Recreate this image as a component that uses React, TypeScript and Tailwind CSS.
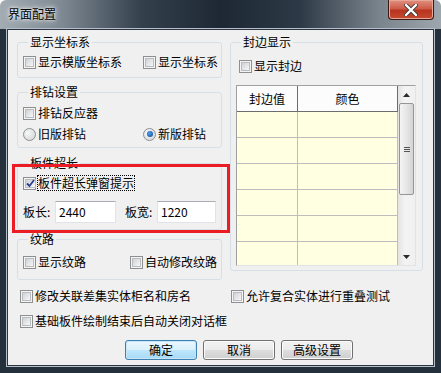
import React from "react";

const font = "font-['SimSun','Noto_Sans_CJK_SC',sans-serif]";

const Box = ({ checked }: { checked?: boolean }) => (
  <span className="w-[13px] h-[13px] shrink-0 border border-[#8e8f8f] bg-[#f4f4f4] p-[1px] flex">
    <span className="flex-1 border border-[#b9bcc0] bg-[linear-gradient(135deg,#cfd2d6,#f7f7f7)] flex items-center justify-center">
      {checked && (
        <svg width="9" height="9" viewBox="0 0 9 9">
          <path d="M1 4.5 L3.5 7 L8 1" fill="none" stroke="#2a3f8f" strokeWidth="1.8" />
        </svg>
      )}
    </span>
  </span>
);

const Radio = ({ checked }: { checked?: boolean }) => (
  <span className="w-[13px] h-[13px] shrink-0 rounded-full border border-[#8e8f8f] bg-[radial-gradient(circle_at_35%_35%,#f7f7f7,#cfd2d6)] flex items-center justify-center">
    {checked && (
      <span className="w-[6px] h-[6px] rounded-full bg-[radial-gradient(circle_at_40%_40%,#4fa2f0,#0b3f8e)]" />
    )}
  </span>
);

const CheckRow = ({ label, checked, focus }: { label: string; checked?: boolean; focus?: boolean }) => (
  <div className="flex items-center gap-[2px] h-[14px] whitespace-nowrap shrink-0">
    <Box checked={checked} />
    <span className={focus ? "outline outline-1 outline-dotted outline-black leading-[14px]" : "leading-[14px]"}>{label}</span>
  </div>
);

const RadioRow = ({ label, checked }: { label: string; checked?: boolean }) => (
  <div className="flex items-center gap-[2px] h-[14px] whitespace-nowrap shrink-0">
    <Radio checked={checked} />
    <span className="leading-[14px]">{label}</span>
  </div>
);

const Group = ({ title, className, children }: { title: string; className: string; children?: React.ReactNode }) => (
  <fieldset className={`border border-[#d5dfe5] rounded-[3px] px-[5px] min-w-0 ${className}`}>
    <legend className="ml-[5px] px-[2px] leading-[14px]">{title}</legend>
    {children}
  </fieldset>
);

const Btn = ({ label, def }: { label: string; def?: boolean }) => (
  <button
    className={`w-[72px] h-[20px] rounded-[3px] border leading-[16px] ${
      def
        ? "border-[#3c7fb1] bg-[linear-gradient(#eaf6fd_0%,#d9f0fc_50%,#bee6fd_51%,#a7d9f5_100%)] shadow-[inset_0_0_0_1px_#c6e6f8]"
        : "border-[#707070] bg-[linear-gradient(#f2f2f2_0%,#ebebeb_50%,#dddddd_51%,#cfcfcf_100%)] shadow-[inset_0_0_0_1px_#fcfcfc]"
    }`}
  >
    {label}
  </button>
);

export default function App() {
  const rows = [0, 1, 2, 3, 4, 5];
  return (
    <div className={`${font} text-[12px] text-black w-[441px] h-[373px] flex flex-col bg-[#24303c] bg-[linear-gradient(90deg,#a3acb3_0%,#7e8993_14%,#34404c_32%,#1d2834_50%,#2d3946_68%,#7a848d_86%,#9ea6ad_100%)] bg-no-repeat bg-[length:100%_29px] rounded-t-[6px] overflow-hidden`}>
      {/* title bar */}
      <div className="h-[29px] flex items-start justify-between shrink-0">
        <span className="ml-[8px] mt-[7px] leading-[14px] text-[12px] text-black [text-shadow:0_0_6px_#ffffff,0_0_3px_#ffffff]">界面配置</span>
        <div className="mr-[7px] w-[46px] h-[20px] rounded-b-[4px] border border-t-0 border-[#3b1a16] bg-[linear-gradient(#e0917f_0%,#cd5d48_45%,#b9341f_55%,#c44a2f_100%)] flex items-center justify-center shadow-[inset_0_0_0_1px_#e8a798]">
          <svg width="14" height="12" viewBox="0 0 14 12">
            <path d="M2 1 L12 11 M12 1 L2 11" stroke="#3a3a3a" strokeWidth="4" strokeLinecap="round" />
            <path d="M2 1 L12 11 M12 1 L2 11" stroke="#ffffff" strokeWidth="2.4" strokeLinecap="round" />
          </svg>
        </div>
      </div>

      {/* client */}
      <div className="mx-[7px] mb-[7px] flex-1 bg-[#f0f0f0] border border-[#2c3642] shadow-[0_0_0_1px_#b4bec8] flex flex-col">
        <div className="flex gap-[8px]">
          {/* left column */}
          <div className="ml-[9px] w-[205px] shrink-0 flex flex-col">
            <Group title="显示坐标系" className="mt-[5px] h-[43px]">
              <div className="mt-[6px] flex">
                <div className="w-[120px] shrink-0">
                  <CheckRow label="显示模版坐标系" />
                </div>
                <CheckRow label="显示坐标系" />
              </div>
            </Group>

            <Group title="排钻设置" className="mt-[7px] h-[63px]">
              <div className="mt-[7px]">
                <CheckRow label="排钻反应器" />
              </div>
              <div className="mt-[7px] flex">
                <div className="w-[120px] shrink-0">
                  <RadioRow label="旧版排钻" />
                </div>
                <RadioRow label="新版排钻" checked />
              </div>
            </Group>

            <div className="relative mt-[8px]">
              <Group title="板件超长" className="h-[74px]">
                <div className="mt-[6px]">
                  <CheckRow label="板件超长弹窗提示" checked focus />
                </div>
                <div className="mt-[11px] flex items-center whitespace-nowrap">
                  <span className="w-[32px] shrink-0">板长:</span>
                  <div className="w-[61px] shrink-0 h-[22px] bg-white border border-[#e2e3ea] border-t-[#abadb3] pl-[3px] leading-[20px]">2440</div>
                  <span className="ml-[9px] w-[32px] shrink-0">板宽:</span>
                  <div className="w-[59px] shrink-0 h-[22px] bg-white border border-[#e2e3ea] border-t-[#abadb3] pl-[3px] leading-[20px]">1220</div>
                </div>
              </Group>
              <div className="absolute left-[-5px] top-[8px] right-[-8px] bottom-[-3px] border-[3px] border-[#ec1c24] pointer-events-none" />
            </div>

            <Group title="纹路" className="mt-[2px] h-[48px]">
              <div className="mt-[9px] flex">
                <div className="w-[107px] shrink-0">
                  <CheckRow label="显示纹路" />
                </div>
                <CheckRow label="自动修改纹路" />
              </div>
            </Group>
          </div>

          {/* right column */}
          <Group title="封边显示" className="mt-[5px] w-[193px] shrink-0 h-[236px]">
            <div className="mt-[10px] ml-[3px]">
              <CheckRow label="显示封边" />
            </div>
            <div className="mt-[12px] w-[180px] h-[181px] border border-[#a0a0a0] border-r-[#e3e3e3] border-b-[#e3e3e3] flex overflow-hidden">
              <div className="w-[161px] flex flex-col bg-[#ffffe1]">
                <div className="h-[26px] shrink-0 flex bg-[#fcfcfc] border-b border-[#6d6d6d]">
                  <div className="w-[61px] border-r border-[#6d6d6d] flex items-center justify-center">封边值</div>
                  <div className="flex-1 border-r border-[#6d6d6d] flex items-center justify-center">颜色</div>
                </div>
                {rows.map((r) => (
                  <div key={r} className="h-[26px] shrink-0 flex border-b border-[#bdbdbd]">
                    <div className="w-[61px] border-r border-[#bdbdbd]" />
                    <div className="flex-1 border-r border-[#bdbdbd]" />
                  </div>
                ))}
              </div>
              {/* scrollbar */}
              <div className="w-[17px] flex flex-col bg-[linear-gradient(90deg,#e3e3e3,#f3f3f3_40%,#f0f0f0)]">
                <div className="h-[17px] flex items-center justify-center">
                  <svg width="7" height="4" viewBox="0 0 7 4"><path d="M3.5 0 L7 4 L0 4 Z" fill="#2a2a2a" /></svg>
                </div>
                <div className="mx-[1px] h-[92px] rounded-[2px] border border-[#959595] bg-[linear-gradient(90deg,#f4f4f4,#e6e6e6_50%,#d4d4d4)] flex flex-col items-center justify-center gap-[1px]">
                  <span className="w-[6px] h-[1px] bg-[#555]" />
                  <span className="w-[6px] h-[1px] bg-[#555]" />
                  <span className="w-[6px] h-[1px] bg-[#555]" />
                </div>
                <div className="flex-1" />
                <div className="h-[17px] flex items-center justify-center">
                  <svg width="7" height="4" viewBox="0 0 7 4"><path d="M0 0 L7 0 L3.5 4 Z" fill="#2a2a2a" /></svg>
                </div>
              </div>
            </div>
          </Group>
        </div>

        {/* bottom options */}
        <div className="mt-[9px] ml-[12px] flex">
          <div className="w-[211px] shrink-0">
            <CheckRow label="修改关联差集实体柜名和房名" />
          </div>
          <CheckRow label="允许复合实体进行重叠测试" />
        </div>
        <div className="mt-[11px] ml-[12px]">
          <CheckRow label="基础板件绘制结束后自动关闭对话框" />
        </div>

        <div className="mt-[12px] ml-[117px] flex gap-[6px]">
          <Btn label="确定" def />
          <Btn label="取消" />
          <Btn label="高级设置" />
        </div>
      </div>
    </div>
  );
}
